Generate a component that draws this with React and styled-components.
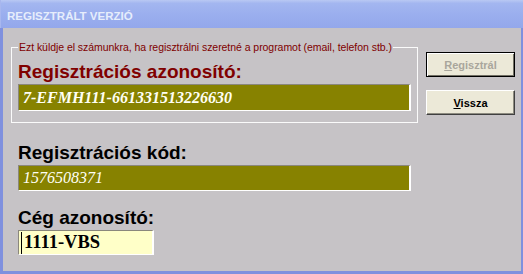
import React from "react";
import styled, { createGlobalStyle } from "styled-components";

const GlobalStyle = createGlobalStyle`
  html, body {
    margin: 0;
    padding: 0;
    background: #c6c3c6;
  }
  body {
    font-family: "Liberation Sans", Arial, sans-serif;
  }
`;

const Window = styled.div`
  width: 523px;
  height: 274px;
  display: flex;
  flex-direction: column;
  box-sizing: border-box;
`;

const TitleBar = styled.div`
  height: 28px;
  flex: none;
  box-sizing: border-box;
  padding: 3px 0 0 6px;
  display: flex;
  align-items: center;
  background: linear-gradient(
    to bottom,
    #b9c8f3 0%,
    #a3b6f0 12%,
    #9aaeee 55%,
    #94a8eb 100%
  );
  border-left: 1px solid #a8b7ee;
  color: #e6edfc;
  font-weight: bold;
  font-size: 11.5px;
`;

const Body = styled.div`
  flex: 1;
  display: flex;
  gap: 8px;
  box-sizing: border-box;
  padding: 13px 0 0 8px;
  background: #c6c3c6;
  border-left: 3px solid #7f90de;
  border-right: 2px solid #7f90de;
  border-bottom: 3px solid #7f90de;
`;

const LeftCol = styled.div`
  width: 407px;
  display: flex;
  flex-direction: column;
`;

const Frame = styled.fieldset`
  margin: 0;
  padding: 0 6px 11px 6px;
  min-width: 0;
  box-sizing: border-box;
  border: 1px solid #fbfbfb;
  display: flex;
  flex-direction: column;
`;

const Legend = styled.legend`
  padding: 0 1px;
  font-size: 10.5px;
  line-height: 12px;
  color: #800000;
  letter-spacing: -0.05px;
`;

const Section = styled.div`
  padding-left: 7px;
  display: flex;
  flex-direction: column;
`;

const Label = styled.div`
  margin-top: ${(p) => p.$top}px;
  height: 20px;
  line-height: 20px;
  font-size: 19px;
  font-weight: bold;
  color: ${(p) => p.$color || "#000"};
  white-space: nowrap;
`;

const Field = styled.div`
  margin-top: 2px;
  width: ${(p) => p.$width}px;
  height: ${(p) => p.$height}px;
  box-sizing: border-box;
  display: flex;
  align-items: center;
  padding-left: ${(p) => (p.$caret ? 2 : 4)}px;
  background: ${(p) => p.$bg};
  border-top: 1px solid #8a877c;
  border-left: 1px solid #8a877c;
  border-bottom: 1px solid #ffffff;
  border-right: 2px solid #ffffff;
  font-family: "Liberation Serif", "Times New Roman", serif;
  font-size: ${(p) => p.$size}px;
  font-style: ${(p) => (p.$italic ? "italic" : "normal")};
  font-weight: ${(p) => (p.$bold ? "bold" : "normal")};
  color: ${(p) => p.$color};
  white-space: nowrap;
`;

const Caret = styled.span`
  width: 1px;
  height: 22px;
  margin-right: 2px;
  background: #000;
`;

const ButtonCol = styled.div`
  padding-top: 11px;
  display: flex;
  flex-direction: column;
  gap: 13px;
`;

const Button = styled.button`
  width: 89px;
  height: 25px;
  padding: 0;
  box-sizing: border-box;
  background: #ece9d8;
  font-family: "Liberation Sans", Arial, sans-serif;
  font-size: 11px;
  font-weight: bold;
  color: ${(p) => (p.disabled ? "#a9a69c" : "#000")};
  border: 1px solid ${(p) => (p.$default ? "#000" : "#fff")};
  border-right-color: ${(p) => (p.$default ? "#000" : "#404040")};
  border-bottom-color: ${(p) => (p.$default ? "#000" : "#404040")};
  box-shadow: ${(p) =>
    p.$default
      ? "inset 1px 1px 0 #fff, inset -1px -1px 0 #716f64"
      : "inset -1px -1px 0 #8d8b80"};
  cursor: default;

  u {
    text-decoration-thickness: 1px;
    text-underline-offset: 1px;
  }
`;

const App = () => {
  return (
    <>
      <GlobalStyle />
      <Window>
        <TitleBar>REGISZTRÁLT VERZIÓ</TitleBar>
        <Body>
          <LeftCol>
            <Frame>
              <Legend>
                Ezt küldje el számunkra, ha regisztrálni szeretné a programot
                (email, telefon stb.)
              </Legend>
              <Label $top={9} $color="#800000">
                Regisztrációs azonosító:
              </Label>
              <Field
                $width={393}
                $height={27}
                $bg="#878200"
                $color="#fffff4"
                $size={16}
                $italic
                $bold
              >
                7-EFMH111-661331513226630
              </Field>
            </Frame>
            <Section>
              <Label $top={20}>Regisztrációs kód:</Label>
              <Field
                $width={393}
                $height={26}
                $bg="#878200"
                $color="#fffff4"
                $size={16}
                $italic
              >
                1576508371
              </Field>
              <Label $top={17}>Cég azonosító:</Label>
              <Field
                $width={136}
                $height={25}
                $bg="#ffffc8"
                $color="#000"
                $size={18.5}
                $bold
                $caret
              >
                <Caret />
                1111-VBS
              </Field>
            </Section>
          </LeftCol>
          <ButtonCol>
            <Button $default disabled>
              <u>R</u>egisztrál
            </Button>
            <Button>
              <u>V</u>issza
            </Button>
          </ButtonCol>
        </Body>
      </Window>
    </>
  );
};

export default App;
